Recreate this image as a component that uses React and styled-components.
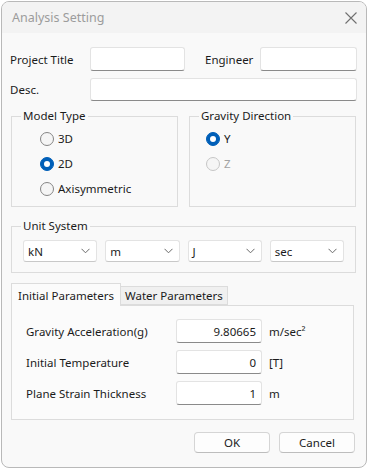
import React from "react";
import styled, { createGlobalStyle } from "styled-components";

const Global = createGlobalStyle`
  html, body { margin: 0; padding: 0; background: #ffffff; }
  body { font-family: "Segoe UI", "Noto Sans", sans-serif; font-size: 11.5px; color: #1b1b1b; }
  * { box-sizing: border-box; }
`;

const Window = styled.div`
  margin: 1px 0 0 1px;
  width: 366px;
  height: 467px;
  border: 1px solid #b9b9b9;
  border-radius: 8px;
  background: #f9f9f9;
  overflow: hidden;
  display: flex;
  flex-direction: column;
`;

const TitleBar = styled.div`
  height: 31px;
  flex: none;
  display: flex;
  align-items: center;
  justify-content: space-between;
  padding: 0 9px 0 10px;
  background: #f3f3f3;
  color: #9c9c9c;
  font-size: 12.5px;
`;

const CloseIcon = styled.svg`
  width: 12px;
  height: 12px;
  stroke: #707070;
  stroke-width: 1.1;
`;

const Body = styled.div`
  flex: 1;
  display: flex;
  flex-direction: column;
  padding: 14px 10px 0 9px;
`;

const FieldRow = styled.div`
  display: flex;
  align-items: center;
  height: ${(p) => p.$h}px;
  margin-bottom: ${(p) => p.$mb || 0}px;
`;

const Label = styled.span`
  width: ${(p) => p.$w}px;
  flex: none;
  margin-left: ${(p) => p.$ml || 0}px;
`;

const TextBox = styled.div`
  height: 100%;
  width: ${(p) => (p.$w ? `${p.$w}px` : "auto")};
  flex: ${(p) => (p.$w ? "none" : "1")};
  background: #ffffff;
  border: 1px solid #e3e3e3;
  border-bottom-color: #8a8a8a;
  border-radius: 3px;
  margin-right: -1px;
`;

const GroupGrid = styled.div`
  display: grid;
  grid-template-columns: 167px 167px;
  column-gap: 11px;
  margin-top: 7px;
`;

const Group = styled.fieldset`
  margin: 0;
  margin-top: ${(p) => p.$mt || 0}px;
  padding: 0;
  border: 1px solid #dcdcdc;
  border-radius: 0;
  min-width: 0;
`;

const Legend = styled.legend`
  margin: 0 auto 0 9px;
  padding: 0 2px;
  line-height: 16px;
  font-size: 11.5px;
  color: #1b1b1b;
`;

const GroupBody = styled.div`
  padding: ${(p) => p.$pad};
`;

const RadioRow = styled.div`
  display: flex;
  align-items: center;
  height: 25px;
  gap: 4px;
  color: ${(p) => (p.$disabled ? "#a3a3a3" : "#1b1b1b")};
`;

const RadioCircle = styled.span`
  width: 14px;
  height: 14px;
  border-radius: 50%;
  flex: none;
  position: relative;
  background: ${(p) => (p.$checked ? "#005fb8" : "#f5f5f5")};
  border: 1px solid
    ${(p) => (p.$checked ? "#005fb8" : p.$disabled ? "#c6c6c6" : "#858585")};
  &::after {
    content: "";
    display: ${(p) => (p.$checked ? "block" : "none")};
    position: absolute;
    left: 3px;
    top: 3px;
    width: 6px;
    height: 6px;
    border-radius: 50%;
    background: #ffffff;
  }
`;

const SelectGrid = styled.div`
  display: grid;
  grid-template-columns: repeat(4, 1fr);
  column-gap: 8px;
`;

const SelectBox = styled.div`
  height: 22px;
  display: flex;
  align-items: center;
  justify-content: space-between;
  padding: 0 6px 0 4px;
  background: #ffffff;
  border: 1px solid #e3e3e3;
  border-bottom-color: #c8c8c8;
  border-radius: 3px;
`;

const Chevron = styled.svg`
  width: 9px;
  height: 6px;
  fill: none;
  stroke: #6a6a6a;
  stroke-width: 1;
`;

const TabStrip = styled.div`
  display: flex;
  align-items: flex-end;
  margin-top: 10px;
  height: 22px;
  position: relative;
  z-index: 1;
`;

const Tab = styled.div`
  height: ${(p) => (p.$active ? 23 : 19)}px;
  padding: 0 ${(p) => (p.$active ? 6 : 4)}px;
  display: flex;
  align-items: center;
  background: ${(p) => (p.$active ? "#fbfbfb" : "#f0f0f0")};
  border: 1px solid #dcdcdc;
  border-bottom: ${(p) => (p.$active ? "none" : "1px solid #dcdcdc")};
  margin-left: ${(p) => (p.$active ? 0 : -1)}px;
  margin-bottom: ${(p) => (p.$active ? -1 : 0)}px;
`;

const TabPanel = styled.div`
  margin-right: 2px;
  height: 115px;
  background: #fbfbfb;
  border: 1px solid #dcdcdc;
  padding: 13px 0 0 14px;
  display: flex;
  flex-direction: column;
  gap: 7px;
`;

const ParamRow = styled.div`
  display: flex;
  align-items: center;
  height: 24px;
`;

const ParamLabel = styled.span`
  width: 150px;
  flex: none;
`;

const ValueBox = styled.div`
  width: 86px;
  height: 24px;
  display: flex;
  align-items: center;
  justify-content: flex-end;
  padding-right: 5px;
  background: #ffffff;
  border: 1px solid #e3e3e3;
  border-bottom-color: #8a8a8a;
  border-radius: 3px;
`;

const Unit = styled.span`
  margin-left: 7px;
`;

const ButtonRow = styled.div`
  display: flex;
  justify-content: flex-end;
  gap: 9px;
  margin-top: 12px;
  padding-right: 1px;
`;

const Button = styled.div`
  width: 76px;
  height: 21px;
  display: flex;
  align-items: center;
  justify-content: center;
  background: #fdfdfd;
  border: 1px solid #d5d5d5;
  border-bottom-color: #bdbdbd;
  border-radius: 4px;
`;

const Radio = ({ checked, disabled, children }) => (
  <RadioRow $disabled={disabled}>
    <RadioCircle $checked={checked} $disabled={disabled} />
    <span>{children}</span>
  </RadioRow>
);

const Select = ({ value }) => (
  <SelectBox>
    <span>{value}</span>
    <Chevron viewBox="0 0 9 6">
      <path d="M0.5 0.8 L4.5 4.8 L8.5 0.8" />
    </Chevron>
  </SelectBox>
);

export default function App() {
  return (
    <>
      <Global />
      <Window>
        <TitleBar>
          <span>Analysis Setting</span>
          <CloseIcon viewBox="0 0 12 12">
            <path d="M0.5 0.5 L11.5 11.5 M11.5 0.5 L0.5 11.5" />
          </CloseIcon>
        </TitleBar>
        <Body>
          <FieldRow $h={24} $mb={7}>
            <Label $w={80} $ml={-1}>Project Title</Label>
            <TextBox $w={95} />
            <Label $w={55} $ml={21}>Engineer</Label>
            <TextBox />
          </FieldRow>
          <FieldRow $h={23}>
            <Label $w={80} $ml={-1}>Desc.</Label>
            <TextBox />
          </FieldRow>

          <GroupGrid>
            <Group>
              <Legend>Model Type</Legend>
              <GroupBody $pad="2px 0 5px 28px">
                <Radio>3D</Radio>
                <Radio checked>2D</Radio>
                <Radio>Axisymmetric</Radio>
              </GroupBody>
            </Group>
            <Group>
              <Legend>Gravity Direction</Legend>
              <GroupBody $pad="2px 0 5px 16px">
                <Radio checked>Y</Radio>
                <Radio disabled>Z</Radio>
              </GroupBody>
            </Group>
          </GroupGrid>

          <Group $mt={11}>
            <Legend>Unit System</Legend>
            <GroupBody $pad="6px 11px 10px 11px">
              <SelectGrid>
                <Select value="kN" />
                <Select value="m" />
                <Select value="J" />
                <Select value="sec" />
              </SelectGrid>
            </GroupBody>
          </Group>

          <TabStrip>
            <Tab $active>Initial Parameters</Tab>
            <Tab>Water Parameters</Tab>
          </TabStrip>
          <TabPanel>
            <ParamRow>
              <ParamLabel>Gravity Acceleration(g)</ParamLabel>
              <ValueBox>9.80665</ValueBox>
              <Unit>m/sec²</Unit>
            </ParamRow>
            <ParamRow>
              <ParamLabel>Initial Temperature</ParamLabel>
              <ValueBox>0</ValueBox>
              <Unit>[T]</Unit>
            </ParamRow>
            <ParamRow>
              <ParamLabel>Plane Strain Thickness</ParamLabel>
              <ValueBox>1</ValueBox>
              <Unit>m</Unit>
            </ParamRow>
          </TabPanel>

          <ButtonRow>
            <Button>OK</Button>
            <Button>Cancel</Button>
          </ButtonRow>
        </Body>
      </Window>
    </>
  );
}
